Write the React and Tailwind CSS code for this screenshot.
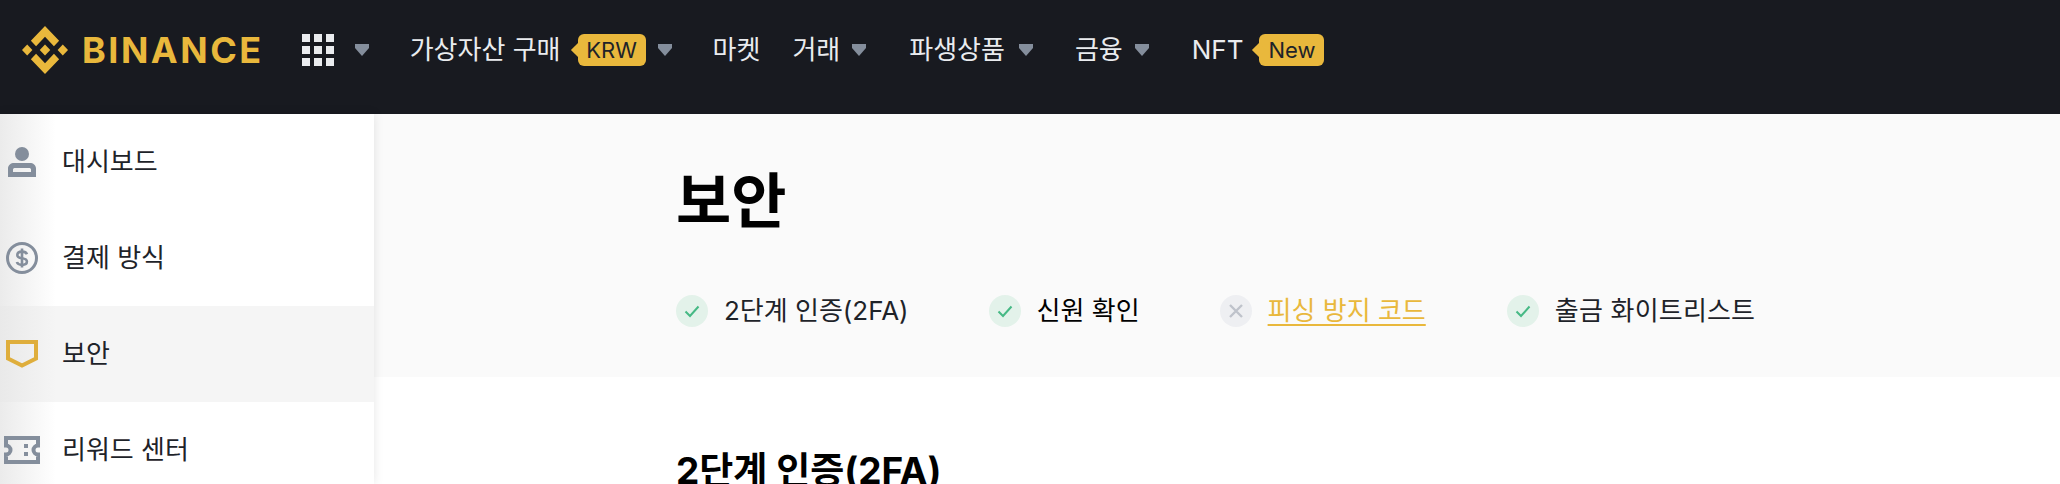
const FONT = "font-['Inter','Noto_Sans_CJK_KR',sans-serif]";

function Caret({ className = "" }) {
  return (
    <svg width="14" height="12" viewBox="0 0 14 12" className={className}>
      <polygon points="0,0 14,0 14,4 7,12 0,4" fill="#848e9c" />
    </svg>
  );
}

function Logo() {
  return (
    <svg width="46" height="48" viewBox="0 0 126.61 126.61" preserveAspectRatio="none" className="shrink-0">
      <g fill="#e9b83c">
        <polygon points="38.73 53.2 63.31 28.63 87.9 53.22 102.2 38.92 63.31 0 24.43 38.9 38.73 53.2" />
        <polygon points="0 63.31 14.3 49.01 28.6 63.31 14.3 77.61 0 63.31" />
        <polygon points="38.73 73.41 63.31 97.99 87.9 73.4 102.21 87.69 63.31 126.61 24.42 87.72 24.4 87.7 38.73 73.41" />
        <polygon points="98.01 63.31 112.31 49.01 126.61 63.3 112.31 77.61 98.01 63.31" />
        <polygon points="77.82 63.3 63.31 48.79 48.81 63.3 63.31 77.82 77.82 63.31" />
      </g>
    </svg>
  );
}

function Grid() {
  return (
    <div className="grid grid-cols-3 gap-[4px] w-[32px] h-[32px] shrink-0">
      {Array.from({ length: 9 }).map((_, i) => (
        <div key={i} className="bg-[#eaecef]" />
      ))}
    </div>
  );
}

function Badge({ children, w }) {
  return (
    <span className={`relative flex items-center justify-center h-[32px] rounded-[6px] bg-[#e9b83c] text-[#1e2329] text-[22px] leading-none ${w}`}>
      <span className="absolute left-[-5px] top-[11px] w-[10px] h-[10px] rotate-45 bg-[#e9b83c]" />
      <span className="relative">{children}</span>
    </span>
  );
}

function NavText({ children, className = "" }) {
  return <span className={`text-[26px] leading-none text-[#eaecef] whitespace-nowrap ${className}`}>{children}</span>;
}

function Header() {
  return (
    <header className="h-[114px] bg-[#181a20] flex items-center pb-[15px] pl-[22px]">
      <Logo />
      <span className="ml-[14px] text-[36px] leading-none font-bold tracking-[2.5px] text-[#e9b83c] font-['Inter',sans-serif]">BINANCE</span>
      <div className="ml-[38px] flex items-center"><Grid /></div>
      <Caret className="ml-[21px]" />
      <NavText className="ml-[41px]">가상자산 구매</NavText>
      <Badge w="ml-[17px] w-[68px]">KRW</Badge>
      <Caret className="ml-[12px]" />
      <NavText className="ml-[41px]">마켓</NavText>
      <NavText className="ml-[32px]">거래</NavText>
      <Caret className="ml-[12px]" />
      <NavText className="ml-[43px]">파생상품</NavText>
      <Caret className="ml-[14px]" />
      <NavText className="ml-[42px]">금융</NavText>
      <Caret className="ml-[12px]" />
      <NavText className="ml-[43px]">NFT</NavText>
      <Badge w="ml-[16px] w-[65px]">New</Badge>
    </header>
  );
}

const ICON = "#848e9c";

function UserIcon() {
  return (
    <svg width="28" height="30" viewBox="0 0 28 30">
      <circle cx="14" cy="7" r="7" fill={ICON} />
      <path fillRule="evenodd" fill={ICON} d="M0 30V21.5C0 18 3 16 6 16H22C25 16 28 18 28 21.5V30H0ZM5 25H23V22.5C23 21.5 22 21 21 21H7C6 21 5 21.5 5 22.5V25Z" />
    </svg>
  );
}

function DollarIcon() {
  return (
    <svg width="32" height="32" viewBox="0 0 32 32">
      <circle cx="16" cy="16" r="14.5" fill="none" stroke={ICON} strokeWidth="3" />
      <path d="M21 12.2C20.3 10.4 18.4 9.6 16 9.6C13.4 9.6 11.3 10.8 11.3 13C11.3 15.4 13.6 15.9 16 16.3C18.5 16.7 20.9 17.3 20.9 19.6C20.9 21.8 18.7 22.9 16 22.9C13.4 22.9 11.5 22 10.9 20" fill="none" stroke={ICON} strokeWidth="2.6" />
      <path d="M16 6.5V25.5" stroke={ICON} strokeWidth="2.6" />
    </svg>
  );
}

function ShieldIcon() {
  return (
    <svg width="32" height="28" viewBox="0 0 32 28">
      <polygon points="2,2 30,2 30,18.5 16,25.5 2,18.5" fill="none" stroke="#dfae3c" strokeWidth="4" />
    </svg>
  );
}

function TicketIcon() {
  return (
    <svg width="36" height="28" viewBox="0 0 36 28">
      <path fill="none" stroke={ICON} strokeWidth="4" d="M2 2H34V9.5A4.5 4.5 0 0 0 34 18.5V26H2V18.5A4.5 4.5 0 0 0 2 9.5V2Z" />
      <rect x="20" y="8" width="4" height="4" fill={ICON} />
      <rect x="20" y="16" width="4" height="4" fill={ICON} />
    </svg>
  );
}

function SideItem({ icon, label, active }) {
  return (
    <div className={`h-[96px] flex items-center ${active ? "bg-[#f5f5f5]" : ""}`}>
      <div className="relative z-10 w-[44px] flex justify-center shrink-0">{icon}</div>
      <span className="ml-[18px] text-[26px] leading-none text-[#1e2329] whitespace-nowrap">{label}</span>
    </div>
  );
}

function Sidebar() {
  return (
    <aside className="relative z-10 w-[374px] shrink-0 h-full bg-white shadow-[0_0_10px_rgba(0,0,0,0.1)] overflow-hidden">
      <SideItem icon={<UserIcon />} label="대시보드" />
      <SideItem icon={<DollarIcon />} label="결제 방식" />
      <SideItem icon={<ShieldIcon />} label="보안" active />
      <SideItem icon={<TicketIcon />} label="리워드 센터" />
      <div className="absolute inset-y-0 left-0 w-[56px] bg-gradient-to-r from-[#e6e6e6]/80 to-transparent pointer-events-none" />
    </aside>
  );
}

function StatusDot({ ok }) {
  return (
    <span className={`w-[32px] h-[32px] rounded-full flex items-center justify-center shrink-0 ${ok ? "bg-[#e3f2ea]" : "bg-[#eeeff2]"}`}>
      {ok ? (
        <svg width="18" height="18" viewBox="0 0 18 18">
          <path d="M2.5 9.5L7 14L15.5 4.5" fill="none" stroke="#46b985" strokeWidth="2" />
        </svg>
      ) : (
        <svg width="18" height="18" viewBox="0 0 18 18">
          <path d="M3 3L15 15M15 3L3 15" fill="none" stroke="#bfc3cb" strokeWidth="2.4" />
        </svg>
      )}
    </span>
  );
}

function Status({ ok, children, className = "", wrap = "" }) {
  return (
    <div className={`flex items-center gap-[16px] ${wrap}`}>
      <StatusDot ok={ok} />
      <span className={`text-[26px] leading-none whitespace-nowrap ${className}`}>{children}</span>
    </div>
  );
}

function Main() {
  return (
    <main className="flex-1 min-w-0">
      <section className="h-[263px] bg-[#fafafa] pl-[302px] pt-[51px]">
        <h1 className="text-[60px] leading-[72px] font-bold text-black">보안</h1>
        <div className="mt-[58px] flex items-center gap-[80px]">
          <Status ok className="text-[#1e2329]">2단계 인증(2FA)</Status>
          <Status ok className="text-black">신원 확인</Status>
          <Status className="text-[#e9b83c] underline decoration-2 underline-offset-4">피싱 방지 코드</Status>
          <Status ok wrap="ml-[1px]" className="text-[#1e2329] tracking-[0.2px]">출금 화이트리스트</Status>
        </div>
      </section>
      <section className="pl-[302px] pt-[70px]">
        <h2 className="text-[37px] leading-[48px] font-bold text-black whitespace-nowrap">2단계 인증(2FA)</h2>
      </section>
    </main>
  );
}

export default function App() {
  return (
    <div className={`w-[2060px] h-[484px] overflow-hidden bg-white flex flex-col ${FONT}`}>
      <Header />
      <div className="flex flex-1 min-h-0">
        <Sidebar />
        <Main />
      </div>
    </div>
  );
}
